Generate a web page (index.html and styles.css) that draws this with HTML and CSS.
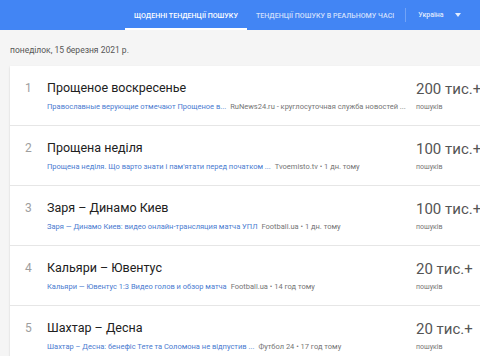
FILE: index.html
```html
<!DOCTYPE html>
<html lang="uk">
<head>
  <meta charset="UTF-8" />
  <meta name="viewport" content="width=device-width, initial-scale=1.0"/>
  <title>Тенденції пошуку</title>
  <link rel="stylesheet" href="styles.css">
</head>
<body>
  <header class="topbar">
    <nav class="tabs">
      <a class="tab active">Щоденні тенденції пошуку</a>
      <a class="tab">Тенденції пошуку в реальному часі</a>
    </nav>
    <span class="divider"></span>
    <div class="geo">Україна <span class="caret"></span></div>
  </header>

  <div class="date">понеділок, 15 березня 2021 р.</div>

  <div class="card">
    <div class="row">
      <div class="rank">1</div>
      <div class="info">
        <div class="title">Прощеное воскресенье</div>
        <div class="sub"><span class="link">Православные верующие отмечают Прощеное в...</span><span class="src">RuNews24.ru - круглосуточная служба новостей ...</span></div>
      </div>
      <div class="count"><div class="num">200 тис.+</div><div class="lbl">пошуків</div></div>
    </div>
    <div class="row">
      <div class="rank">2</div>
      <div class="info">
        <div class="title">Прощена неділя</div>
        <div class="sub"><span class="link">Прощена неділя. Що варто знати і пам'ятати перед початком ...</span><span class="src">Tvoemisto.tv • 1 дн. тому</span></div>
      </div>
      <div class="count"><div class="num">100 тис.+</div><div class="lbl">пошуків</div></div>
    </div>
    <div class="row">
      <div class="rank">3</div>
      <div class="info">
        <div class="title">Заря – Динамо Киев</div>
        <div class="sub"><span class="link">Заря — Динамо Киев: видео онлайн-трансляция матча УПЛ</span><span class="src">Football.ua • 1 дн. тому</span></div>
      </div>
      <div class="count"><div class="num">100 тис.+</div><div class="lbl">пошуків</div></div>
    </div>
    <div class="row">
      <div class="rank">4</div>
      <div class="info">
        <div class="title">Кальяри – Ювентус</div>
        <div class="sub"><span class="link">Кальяри — Ювентус 1:3 Видео голов и обзор матча</span><span class="src">Football.ua • 14 год тому</span></div>
      </div>
      <div class="count"><div class="num">20 тис.+</div><div class="lbl">пошуків</div></div>
    </div>
    <div class="row">
      <div class="rank">5</div>
      <div class="info">
        <div class="title">Шахтар – Десна</div>
        <div class="sub"><span class="link">Шахтар – Десна: бенефіс Тете та Соломона не відпустив ...</span><span class="src">Футбол 24 • 17 год тому</span></div>
      </div>
      <div class="count"><div class="num">20 тис.+</div><div class="lbl">пошуків</div></div>
    </div>
  </div>
</body>
</html>
```

FILE: styles.css
```css
body {
  margin: 0;
  padding: 0;
  background: #f5f5f5;
  font-family: Roboto, "Liberation Sans", sans-serif;
  overflow: hidden;
}

.topbar {
  height: 30px;
  background: #4285f4;
  display: flex;
  align-items: stretch;
  color: white;
  white-space: nowrap;
}

.tabs {
  display: flex;
  margin-left: 125px;
}

.tab {
  display: flex;
  align-items: center;
  padding: 2px 9px 0;
  font-size: 7.1px;
  font-weight: 500;
  text-transform: uppercase;
  color: rgba(255, 255, 255, 0.75);
  border-bottom: 2px solid transparent;
  box-sizing: border-box;
}

.tab.active {
  color: white;
  border-bottom-color: white;
}

.divider {
  width: 1px;
  height: 14px;
  background: rgba(255, 255, 255, 0.25);
  align-self: center;
  margin: 0 12px 0 2px;
}

.geo {
  display: flex;
  align-items: center;
  font-size: 7px;
  font-weight: 500;
  color: rgba(255, 255, 255, 0.85);
}

.caret {
  margin-left: 11px;
  border-left: 3px solid transparent;
  border-right: 3px solid transparent;
  border-top: 4px solid rgba(255, 255, 255, 0.85);
}

.date {
  padding: 15px 10px 11px;
  font-size: 8.5px;
  color: #555;
}

.card {
  margin: 0 -20px 0 10px;
  background: white;
  box-shadow: 0 1px 2px rgba(0, 0, 0, 0.15);
}

.row {
  display: flex;
  align-items: flex-start;
  height: 60px;
  box-sizing: border-box;
  padding-top: 14px;
  border-bottom: 1px solid #e6e6e6;
}

.rank {
  width: 37px;
  padding-left: 15px;
  box-sizing: border-box;
  font-size: 12px;
  color: #9e9e9e;
  line-height: 16px;
}

.info {
  width: 369px;
}

.title {
  font-size: 12.5px;
  color: #212121;
  line-height: 16px;
}

.sub {
  margin-top: 6px;
  font-size: 7.5px;
  white-space: nowrap;
  overflow: hidden;
}

.link {
  color: #4a7bd0;
  margin-right: 4px;
}

.src {
  color: #757575;
}

.count .num {
  font-size: 15px;
  color: #555;
  line-height: 18px;
}

.count .lbl {
  margin-top: 5px;
  font-size: 7px;
  color: #757575;
}
```
